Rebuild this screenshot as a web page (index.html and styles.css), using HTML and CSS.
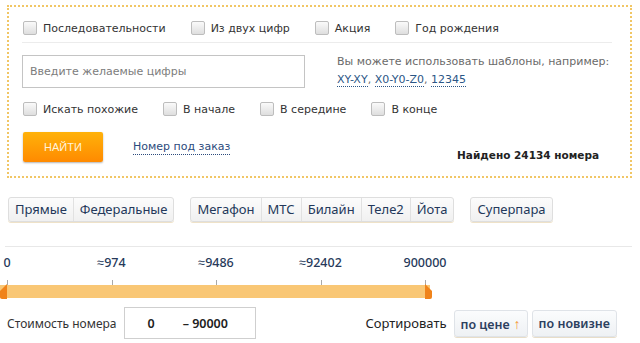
FILE: index.html
```html
<!DOCTYPE html>
<html lang="ru">
<head>
<meta charset="utf-8">
<title>Поиск номера</title>
<link rel="stylesheet" href="styles.css">
</head>
<body>
<div class="filter">
  <div class="row row-top">
    <label class="cb"><span class="box"></span>Последовательности</label>
    <label class="cb"><span class="box"></span>Из двух цифр</label>
    <label class="cb"><span class="box"></span>Акция</label>
    <label class="cb"><span class="box"></span>Год рождения</label>
  </div>
  <div class="row row-search">
    <input class="search" type="text" placeholder="Введите желаемые цифры">
    <div class="hint">Вы можете использовать шаблоны, например:<br><span class="tpl">XY-XY</span>, <span class="tpl">X0-Y0-Z0</span>, <span class="tpl">12345</span></div>
  </div>
  <div class="row row-opts">
    <label class="cb"><span class="box"></span>Искать похожие</label>
    <label class="cb"><span class="box"></span>В начале</label>
    <label class="cb"><span class="box"></span>В середине</label>
    <label class="cb"><span class="box"></span>В конце</label>
  </div>
  <div class="row row-actions">
    <button class="btn-find">НАЙТИ</button>
    <a class="link">Номер под заказ</a>
    <span class="found">Найдено 24134 номера</span>
  </div>
</div>

<div class="tabs">
  <div class="tab-group"><span class="tab">Прямые</span><span class="tab">Федеральные</span></div>
  <div class="tab-group"><span class="tab">Мегафон</span><span class="tab">МТС</span><span class="tab">Билайн</span><span class="tab">Теле2</span><span class="tab">Йота</span></div>
  <div class="tab-group"><span class="tab">Суперпара</span></div>
</div>

<div class="divider"></div>

<div class="slider">
  <div class="scale">
    <span class="mark">0</span>
    <span class="mark">≈974</span>
    <span class="mark">≈9486</span>
    <span class="mark">≈92402</span>
    <span class="mark">900000</span>
  </div>
  <div class="track">
    <div class="ticks"><i class="tick"></i><i class="tick"></i><i class="tick"></i><i class="tick"></i><i class="tick"></i></div>
    <div class="bar"></div>
    <svg class="handle handle-left" width="8" height="15" viewBox="0 0 8 15"><path d="M7 0 V15 H2 Q0 15 0 13 V7 Z" fill="#f0831a"/></svg>
    <svg class="handle handle-right" width="8" height="15" viewBox="0 0 8 15"><path d="M1 0 V15 H6 Q8 15 8 13 V7 Z" fill="#f0831a"/></svg>
  </div>
</div>

<div class="bottom">
  <span class="price-label">Стоимость номера</span>
  <div class="price-box"><span class="from">0</span><span class="to">– 90000</span></div>
  <div class="sort">
    <span class="sort-label">Сортировать</span>
    <span class="sort-btn">по цене<span class="arrow">↑</span></span>
    <span class="sort-btn">по новизне</span>
  </div>
</div>
</body>
</html>
```
FILE: styles.css
```css
* { box-sizing: border-box; }
body {
  margin: 0;
  background: #fff;
  font-family: "DejaVu Sans", sans-serif;
  font-size: 11px;
  color: #333;
}
.filter {
  margin: 5px 8px 0 7px;
  border: 2px dotted #f1c665;
  padding: 11px 18px 14px 13px;
}
.row { display: flex; align-items: center; }
.row-top {
  height: 25px;
  padding-bottom: 4px;
  border-bottom: 1px solid #ececec;
  gap: 24px;
}
.row-opts { height: 20px; margin-top: 10px; gap: 24px; }
.cb { display: flex; align-items: center; gap: 6px; padding-left: 1px; color: #333; }
.box {
  width: 14px;
  height: 14px;
  border: 1px solid #bdbdbd;
  border-radius: 2px;
  background: linear-gradient(#fafafa, #dedede);
}
.row-search { margin-top: 12px; align-items: flex-start; gap: 32px; }
.search {
  width: 283px;
  height: 33px;
  border: 1px solid #c4c4c4;
  padding: 0 7px;
  font-family: "DejaVu Sans", sans-serif;
  font-size: 11px;
  color: #333;
  outline: none;
}
.search::placeholder { color: #7c7c7c; }
.hint { color: #6a6a6a; line-height: 18px; margin-top: -2px; white-space: nowrap; }
.tpl { color: #2b5686; border-bottom: 1px dotted #2b5686; }
.row-actions { margin-top: 13px; align-items: flex-end; }
.btn-find {
  width: 80px;
  height: 30px;
  margin-left: 1px;
  border: none;
  border-radius: 2px;
  background: linear-gradient(#ffb20a, #ff8a00);
  color: #fff3dc;
  font-family: "Liberation Sans", sans-serif;
  font-size: 11px;
  box-shadow: 0 1px 2px rgba(0, 0, 0, 0.3);
}
.link {
  margin-left: 30px;
  align-self: center;
  color: #2b4a7c;
  border-bottom: 1px dotted #2b4a7c;
  line-height: 15px;
}
.found {
  margin-left: auto;
  margin-right: 13px;
  font-weight: bold;
  font-size: 10.5px;
  color: #222;
  line-height: 14px;
}
.tabs { display: flex; gap: 16px; margin: 19px 0 0 8px; }
.tab-group {
  display: flex;
  border: 1px solid #dedede;
  border-radius: 3px;
  background: linear-gradient(#fcfcfc, #f0f0f0);
  box-shadow: 0 1px 0 #efe2c8;
}
.tab {
  height: 23px;
  line-height: 23px;
  padding: 0 6px;
  font-family: "Noto Sans", sans-serif;
  font-size: 13px;
  color: #23385a;
  border-left: 1px solid #e1e1e1;
}
.tab:first-child { border-left: none; }
.divider { height: 1px; background: #e8e8e8; margin: 24px 8px 0 5px; }
.scale {
  display: flex;
  justify-content: space-between;
  width: 418px;
  margin: 8px 0 0 7px;
  height: 16px;
  line-height: 16px;
  font-family: "Noto Sans", sans-serif;
  font-size: 12.5px;
  font-weight: 500;
  color: #26395a;
}
.mark { width: 0; display: flex; justify-content: center; white-space: nowrap; }
.track { position: relative; width: 432px; margin-top: 9px; }
.ticks { display: flex; justify-content: space-between; width: 419px; margin-left: 7px; height: 5px; }
.tick { width: 1px; background: #a9a9a9; }
.bar { width: 430px; height: 13px; background: #f9c775; }
.handle { position: absolute; top: 4px; }
.handle-left { left: 0; }
.handle-right { left: 424px; }
.bottom {
  display: flex;
  align-items: center;
  margin-top: 9px;
  padding: 0 23px 0 7px;
  font-family: "Noto Sans", sans-serif;
  font-size: 12px;
}
.price-label { color: #333; }
.price-box {
  margin-left: 7px;
  width: 132px;
  height: 32px;
  border: 1px solid #cfcfcf;
  display: flex;
  align-items: center;
  font-weight: 600;
  font-size: 12.5px;
  color: #222;
}
.from { margin-left: 23px; }
.to { margin-left: 28px; }
.sort { margin-left: auto; display: flex; align-items: center; gap: 4px; }
.sort-label { margin-right: 3px; color: #222; font-size: 13px; }
.sort-btn {
  height: 27px;
  line-height: 25px;
  padding: 0 6px;
  border: 1px solid #dfe3e8;
  border-radius: 3px;
  background: linear-gradient(#fbfcfd, #eef1f4);
  color: #2c405e;
  font-weight: 600;
  font-size: 12.5px;
  box-shadow: 0 1px 0 #e8ddc8;
}
.arrow { color: #f3963a; margin-left: 4px; font-weight: 400; font-size: 14px; }
```
